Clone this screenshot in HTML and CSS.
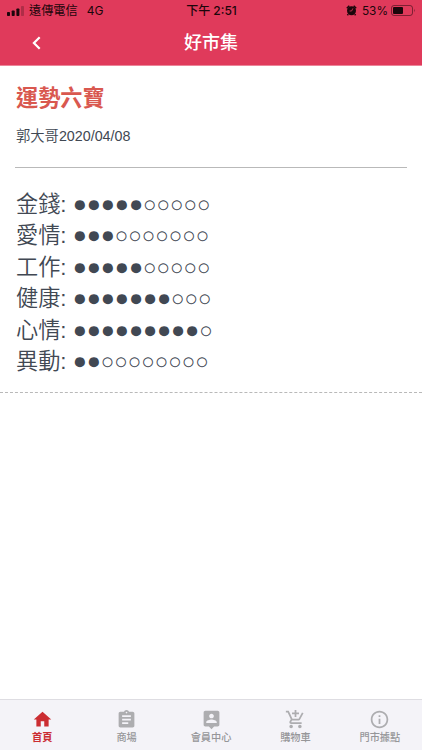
FILE: index.html
```
<!DOCTYPE html>
<html lang="zh-TW">
<head>
    <meta charset="UTF-8">
    <meta name="viewport" content="width=device-width, initial-scale=1.0">
    <title>好市集</title>
    <link rel="stylesheet" href="styles.css">
</head>
<body>
    <div class="app">
        <header class="header">
            <div class="status-bar">
                <div class="status-left">
                    <svg class="signal" width="17" height="10" viewBox="0 0 17 10">
                        <rect x="0" y="6" width="3" height="4" rx="0.8"/>
                        <rect x="4.7" y="4.5" width="3" height="5.5" rx="0.8"/>
                        <rect x="9.4" y="2.5" width="3" height="7.5" rx="0.8"/>
                        <rect x="14" y="0" width="3" height="10" rx="0.8" opacity="0.25"/>
                    </svg>
                    <span class="carrier">遠傳電信</span>
                    <span class="network">4G</span>
                </div>
                <div class="clock">下午 2:51</div>
                <div class="status-right">
                    <svg class="alarm" width="11" height="11" viewBox="0 0 11 11">
                        <circle cx="5.5" cy="5.7" r="4.5"/>
                        <path d="M0.8 3.2L3.3 0.8M10.2 3.2L7.7 0.8M2.3 9.2L1.4 10.3M8.7 9.2L9.6 10.3" stroke="#1c060b" stroke-width="1.5"/>
                        <path d="M6.9 3.4L5.6 6H3.6" fill="none" stroke="#e03a5b" stroke-width="0.8"/>
                    </svg>
                    <span class="percent">53%</span>
                    <svg class="battery" width="25" height="11" viewBox="0 0 25 11">
                        <rect x="0.5" y="0.5" width="21" height="10" rx="2.5" fill="none" stroke="#1c060b" stroke-opacity="0.5"/>
                        <rect x="2" y="2" width="10" height="7" rx="1"/>
                        <path d="M23 3.7q1.6 1.8 0 3.6z" opacity="0.5"/>
                    </svg>
                </div>
            </div>
            <div class="nav-bar">
                <svg class="back" width="9" height="14" viewBox="0 0 9 14">
                    <path d="M7.7 1.2L1.9 7L7.7 12.8"/>
                </svg>
                <h1>好市集</h1>
            </div>
        </header>

        <main class="content">
            <article class="post">
                <h2>運勢六寶</h2>
                <p class="meta">郭大哥2020/04/08</p>
                <ul class="luck">
                    <li>金錢: <span class="full">●●●●●</span><span class="empty">○○○○○</span></li>
                    <li>愛情: <span class="full">●●●</span><span class="empty">○○○○○○○</span></li>
                    <li>工作: <span class="full">●●●●●</span><span class="empty">○○○○○</span></li>
                    <li>健康: <span class="full">●●●●●●●</span><span class="empty">○○○</span></li>
                    <li>心情: <span class="full">●●●●●●●●●</span><span class="empty">○</span></li>
                    <li>異動: <span class="full">●●</span><span class="empty">○○○○○○○○</span></li>
                </ul>
            </article>
        </main>

        <nav class="tab-bar">
            <a class="tab active">
                <svg viewBox="0 0 24 24"><path d="M10 20v-6h4v6h5v-8h3L12 3 2 12h3v8z"/></svg>
                <span>首頁</span>
            </a>
            <a class="tab">
                <svg viewBox="0 0 24 24"><path d="M19 3h-4.18C14.4 1.84 13.3 1 12 1c-1.3 0-2.4.84-2.82 2H5c-1.1 0-2 .9-2 2v14c0 1.1.9 2 2 2h14c1.1 0 2-.9 2-2V5c0-1.1-.9-2-2-2zm-7 0c.55 0 1 .45 1 1s-.45 1-1 1-1-.45-1-1 .45-1 1-1zm2 14H7v-2h7v2zm3-4H7v-2h10v2zm0-4H7V7h10v2z"/></svg>
                <span>商場</span>
            </a>
            <a class="tab">
                <svg viewBox="0 0 24 24"><path d="M19 2H5c-1.11 0-2 .9-2 2v14c0 1.1.89 2 2 2h4l3 3 3-3h4c1.1 0 2-.9 2-2V4c0-1.1-.9-2-2-2zm-7 3.3c1.49 0 2.7 1.21 2.7 2.7 0 1.49-1.21 2.7-2.7 2.7-1.49 0-2.7-1.21-2.7-2.7 0-1.49 1.21-2.7 2.7-2.7zM18 16H6v-.9c0-2 4-3.1 6-3.1s6 1.1 6 3.1v.9z"/></svg>
                <span>會員中心</span>
            </a>
            <a class="tab">
                <svg viewBox="0 0 24 24"><path d="M11 9h2V6h3V4h-3V1h-2v3H8v2h3v3zm-4 9c-1.1 0-1.99.9-1.99 2S5.9 22 7 22s2-.9 2-2-.9-2-2-2zm10 0c-1.1 0-1.99.9-1.99 2s.89 2 1.99 2 2-.9 2-2-.9-2-2-2zm-9.83-3.25l.03-.12.9-1.63h7.45c.75 0 1.41-.41 1.75-1.03l3.86-7.01L19.42 4h-.01l-1.1 2-2.76 5H8.53l-.13-.27L6.16 6l-.95-2-.94-2H1v2h2l3.6 7.59-1.35 2.45c-.16.28-.25.61-.25.96 0 1.1.9 2 2 2h12v-2H7.42c-.13 0-.25-.11-.25-.25z"/></svg>
                <span>購物車</span>
            </a>
            <a class="tab">
                <svg viewBox="0 0 24 24"><path d="M11 17h2v-6h-2v6zm1-15C6.48 2 2 6.48 2 12s4.48 10 10 10 10-4.48 10-10S17.52 2 12 2zm0 18c-4.41 0-8-3.59-8-8s3.59-8 8-8 8 3.59 8 8-3.59 8-8 8zM11 9h2V7h-2v2z"/></svg>
                <span>門市據點</span>
            </a>
        </nav>
    </div>
</body>
</html>
```
FILE: styles.css
```
* {
    box-sizing: border-box;
}
body {
    margin: 0;
    background: #fff;
    color: #414853;
    font-family: "Liberation Sans", "Noto Sans CJK TC", sans-serif;
}
h1, h2, p, ul {
    margin: 0;
    padding: 0;
}
.app {
    display: flex;
    flex-direction: column;
    height: 750px;
    overflow: hidden;
}

/* header */
.header {
    height: 66px;
    background: #e03a5b;
    border-bottom: 1px solid #ec8599;
}
.status-bar {
    display: grid;
    grid-template-columns: 1fr auto 1fr;
    align-items: center;
    height: 22px;
    padding: 0 6px 0 7px;
    color: #1c060b;
    font-family: Inter, "Noto Sans CJK TC", sans-serif;
    font-size: 12px;
    line-height: 20px;
}
.status-bar svg {
    fill: #1c060b;
}
.status-left,
.status-right {
    display: flex;
    align-items: center;
}
.status-right {
    justify-content: flex-end;
}
.carrier {
    margin-left: 5px;
    font-size: 12.2px;
}
.network {
    margin-left: 9px;
}
.clock {
    font-weight: 500;
}
.percent {
    margin: 0 3px 0 5px;
    font-size: 11.8px;
}
.battery {
    margin-bottom: 2px;
}
.alarm {
    margin-bottom: 1px;
}
.nav-bar {
    display: grid;
    grid-template-columns: 1fr auto 1fr;
    align-items: center;
    height: 42px;
}
.back {
    margin-left: 32px;
    fill: none;
    stroke: #fff;
    stroke-width: 2.2;
}
.nav-bar h1 {
    color: #fff;
    font-size: 18px;
    font-weight: 500;
    line-height: 26px;
}

/* article */
.content {
    flex: 1;
}
.post {
    padding: 17px 15px 14px;
    border-bottom: 1px dashed #b9b9b9;
}
.post h2 {
    padding-left: 1px;
    color: #d9584f;
    font-size: 22.2px;
    font-weight: 700;
    line-height: 32px;
}
.meta {
    padding: 10px 0 20px 1px;
    border-bottom: 1px solid #b9b9b9;
    font-size: 14.3px;
    font-weight: 350;
    line-height: 22px;
}
.luck {
    margin-top: 20px;
    padding: 0.5px 0 0 1px;
    list-style: none;
    font-size: 22.2px;
    font-weight: 350;
    line-height: 31.6px;
}
.luck li {
    height: 31.6px;
    white-space: nowrap;
}
.full {
    font-size: 23.5px;
    letter-spacing: -0.15px;
    line-height: 1;
    vertical-align: 0.5px;
}
.empty {
    letter-spacing: 0.1px;
}

/* bottom tabs */
.tab-bar {
    display: flex;
    height: 51px;
    background: #f4f3f8;
    border-top: 1px solid #dedde2;
}
.tab {
    display: flex;
    flex: 1;
    flex-direction: column;
    align-items: center;
    padding-top: 9px;
    color: #969699;
    font-size: 10.2px;
    font-weight: 500;
    line-height: 14px;
}
.tab svg {
    width: 21px;
    height: 21px;
    margin-bottom: 1px;
    fill: #adadb0;
}
.tab.active {
    color: #cb2d32;
    font-weight: 700;
}
.tab.active svg {
    fill: #cb2d32;
}
```
